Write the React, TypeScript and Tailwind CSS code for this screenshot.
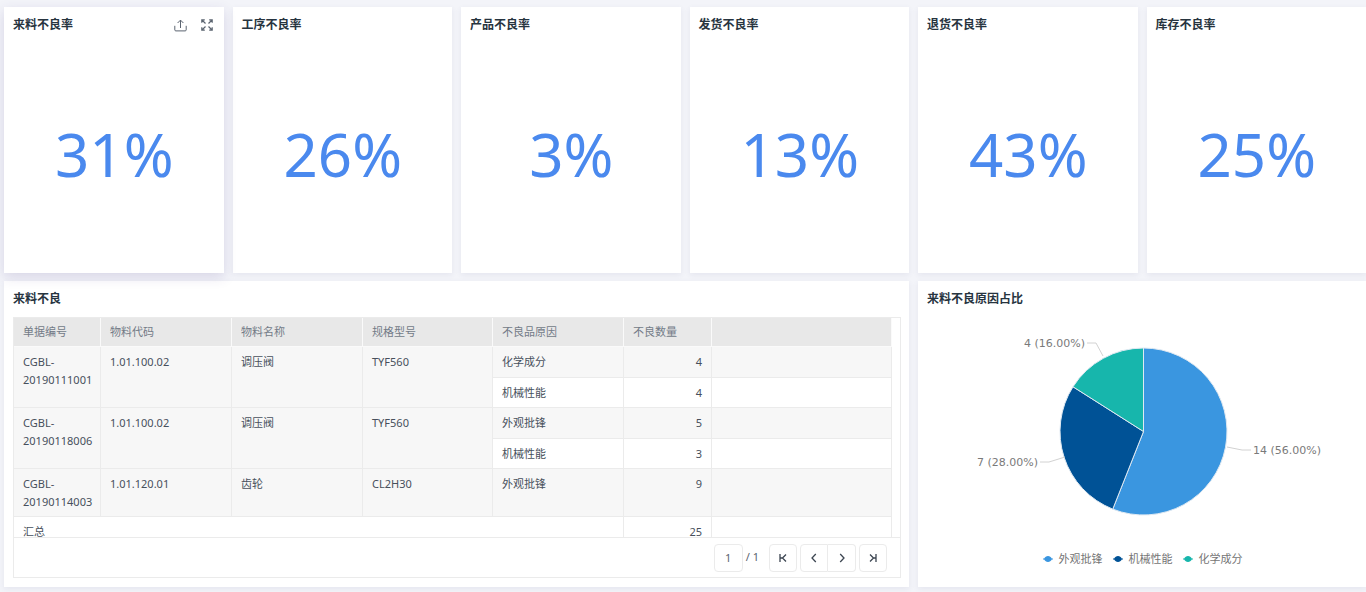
import type { ReactNode } from 'react'

const rates = [
  { title: '来料不良率', value: '31%', active: true },
  { title: '工序不良率', value: '26%' },
  { title: '产品不良率', value: '3%' },
  { title: '发货不良率', value: '13%' },
  { title: '退货不良率', value: '43%' },
  { title: '库存不良率', value: '25%' },
]

const columns = ['单据编号', '物料代码', '物料名称', '规格型号', '不良品原因', '不良数量']

const records = [
  {
    id: 'CGBL-20190111001',
    code: '1.01.100.02',
    name: '调压阀',
    model: 'TYF560',
    reasons: [
      { label: '化学成分', count: 4 },
      { label: '机械性能', count: 4 },
    ],
  },
  {
    id: 'CGBL-20190118006',
    code: '1.01.100.02',
    name: '调压阀',
    model: 'TYF560',
    reasons: [
      { label: '外观批锋', count: 5 },
      { label: '机械性能', count: 3 },
    ],
  },
  {
    id: 'CGBL-20190114003',
    code: '1.01.120.01',
    name: '齿轮',
    model: 'CL2H30',
    reasons: [{ label: '外观批锋', count: 9 }],
  },
]

const slices = [
  { name: '外观批锋', count: 14, color: '#3a96e0' },
  { name: '机械性能', count: 7, color: '#005296' },
  { name: '化学成分', count: 4, color: '#17b6ac' },
]

const labels = [
  { text: '14 (56.00%)', x: 310, y: 129, anchor: 'start' as const, line: '284,122 299,125 308,125' },
  { text: '7 (28.00%)', x: 95, y: 141, anchor: 'end' as const, line: '97,137 106,137 122,132' },
  { text: '4 (16.00%)', x: 142, y: 22, anchor: 'end' as const, line: '144,18 153,18 160,31' },
]

function ExportIcon() {
  return (
    <svg width="13" height="13" viewBox="0 0 13 13" fill="none" stroke="#5b6470" strokeWidth="1">
      <path d="M.8 6.8v4.1c0 .6.4 1 1 1h9.4c.6 0 1-.4 1-1V6.8M6.5 9V1.2M3.6 4l2.9-2.9L9.4 4" />
    </svg>
  )
}

function ExpandIcon() {
  return (
    <svg width="12" height="12" viewBox="0 0 12 12" fill="none" stroke="#5b6470" strokeWidth="1.2">
      <path d="M.8 3.800V.8h3M1 1l3.500 3.500M8.200.8h3v3M11 1 7.500 4.500M.8 8.200v3h3M1 11l3.500-3.500M8.200 11.200h3v-3M11 11 7.500 7.500" />
    </svg>
  )
}

function Card({
  title,
  active,
  className = '',
  children,
}: {
  title: string
  active?: boolean
  className?: string
  children: ReactNode
}) {
  return (
    <section
      className={`flex min-w-0 flex-col bg-white pl-[9px] pr-2 ${
        active
          ? 'relative shadow-[0_4px_12px_rgba(70,50,130,0.16)]'
          : 'shadow-[0_2px_6px_rgba(60,60,110,0.08)]'
      } ${className}`}
    >
      <header className="flex h-9 shrink-0 items-center justify-between">
        <h2 className="text-xs font-bold text-[#27343f]">{title}</h2>
        {active && (
          <div className="flex items-center gap-3.5 pr-[3px]">
            <button type="button" aria-label="导出">
              <ExportIcon />
            </button>
            <button type="button" aria-label="全屏">
              <ExpandIcon />
            </button>
          </div>
        )}
      </header>
      {children}
    </section>
  )
}

const cell = 'border-b border-r border-[#ebebeb] px-[9px] pb-[5px] pt-1.5 align-top'

function DefectTable() {
  return (
    <table className="w-full table-fixed border-separate border-spacing-0 text-[11px] leading-[18px] text-[#47505c]">
      <colgroup>
        <col className="w-[87px]" />
        <col className="w-[131px]" />
        <col className="w-[131px]" />
        <col className="w-[130px]" />
        <col className="w-[131px]" />
        <col className="w-[88px]" />
        <col />
      </colgroup>
      <thead>
        <tr>
          {[...columns, ''].map((name) => (
            <th
              key={name}
              className="h-[29px] border-b border-r border-[#fafafa] bg-[#e8e8e8] px-[9px] text-left font-normal text-[#737b87]"
            >
              {name}
            </th>
          ))}
        </tr>
      </thead>
      <tbody>
        {records.map((record) =>
          record.reasons.map((reason, i) => (
            <tr key={record.id + reason.label} className={i === 0 ? 'h-[31px] bg-[#f7f7f7]' : 'h-[30px]'}>
              {i === 0 &&
                [record.id, record.code, record.name, record.model].map((text, n) => (
                  <td key={n} rowSpan={record.reasons.length} className={`${cell} bg-[#f7f7f7]`}>
                    {text}
                  </td>
                ))}
              <td className={cell}>{reason.label}</td>
              <td className={`${cell} text-right`}>{reason.count}</td>
              <td className={cell} />
            </tr>
          )),
        )}
        <tr className="h-[31px]">
          <td colSpan={5} className={cell}>
            汇总
          </td>
          <td className={`${cell} text-right`}>25</td>
          <td className={cell} />
        </tr>
      </tbody>
    </table>
  )
}

function PageIcon({ d }: { d: string }) {
  return (
    <svg width="10" height="10" viewBox="0 0 10 10" fill="none" stroke="#3d4652" strokeWidth="1.3">
      <path d={d} />
    </svg>
  )
}

function Pager() {
  const button = 'flex h-7 w-7 items-center justify-center border border-[#ebebeb]'
  return (
    <div className="flex h-10 items-center justify-end border-t border-[#ebebeb] pr-[13px] text-[11px] text-[#5b6470]">
      <input
        aria-label="页码"
        defaultValue="1"
        className="h-7 w-[29px] rounded-sm border border-[#ebebeb] text-center"
      />
      <span className="ml-[3px]">/ 1</span>
      <button type="button" aria-label="首页" className={`${button} ml-2.5 rounded-sm`}>
        <PageIcon d="M2 1v8M8 1.5 4.5 5 8 8.5M2 5h2.5" />
      </button>
      <button type="button" aria-label="上一页" className={`${button} ml-[3px] rounded-l-sm`}>
        <PageIcon d="M6.8 1 3 5l3.8 4" />
      </button>
      <button type="button" aria-label="下一页" className={`${button} rounded-r-sm border-l-0`}>
        <PageIcon d="M3.2 1 7 5 3.2 9" />
      </button>
      <button type="button" aria-label="末页" className={`${button} ml-[3px] rounded-sm`}>
        <PageIcon d="M8 1v8M2 1.5 5.5 5 2 8.5M8 5H5.5" />
      </button>
    </div>
  )
}

function slicePath(from: number, to: number) {
  const cx = 200.5
  const cy = 106.5
  const r = 83.5
  const point = (t: number) =>
    `${cx + r * Math.sin(t * 2 * Math.PI)} ${cy - r * Math.cos(t * 2 * Math.PI)}`
  return `M${cx} ${cy}L${point(from)}A${r} ${r} 0 ${to - from > 0.5 ? 1 : 0} 1 ${point(to)}Z`
}

function ReasonPie() {
  const total = slices.reduce((sum, s) => sum + s.count, 0)
  let start = 0
  return (
    <div className="flex flex-col items-center pt-2">
      <svg width="400" height="212" viewBox="0 0 400 212" className="max-w-full">
        {slices.map((s) => {
          const from = start
          start += s.count / total
          return <path key={s.name} d={slicePath(from, start)} fill={s.color} stroke="#dfe9f2" strokeWidth="1" />
        })}
        {labels.map((l) => (
          <g key={l.text}>
            <polyline points={l.line} fill="none" stroke="#d2d2d2" />
            <text
              x={l.x}
              y={l.y}
              textAnchor={l.anchor}
              className="fill-[#7a7a7a] font-['DejaVu_Sans',sans-serif] text-[11px]"
            >
              {l.text}
            </text>
          </g>
        ))}
      </svg>
      <ul className="mt-3.5 flex gap-2.5 text-[11px] leading-4 text-[#757575]">
        {slices.map((s) => (
          <li key={s.name} className="flex items-center gap-1.5">
            <svg width="10" height="6" viewBox="0 0 10 6" fill={s.color}>
              <path d="M0 2.5h1.2C2 1 3.300 0 5 0s3 1 3.800 2.500H10v1H8.800C8 5 6.700 6 5 6S2 5 1.200 3.500H0z" />
            </svg>
            {s.name}
          </li>
        ))}
      </ul>
    </div>
  )
}

export default function App() {
  return (
    <main className="min-h-screen bg-[#f3f4f9] pb-1.5 pl-1 pt-[7px] font-['Noto_Sans','Noto_Sans_CJK_SC',sans-serif]">
      <div className="grid grid-cols-6 gap-x-[9px] gap-y-2">
        {rates.map((rate) => (
          <Card key={rate.title} title={rate.title} active={rate.active} className="h-[266px]">
            <p className="flex flex-1 items-center justify-center pb-2 text-[60px] leading-none text-[#4a89ee]">
              {rate.value}
            </p>
          </Card>
        ))}
        <Card title="来料不良" className="col-span-4 pb-[9px]">
          <div className="border border-[#ebebeb]">
            <div className="h-[219px] overflow-hidden pr-2">
              <DefectTable />
            </div>
            <Pager />
          </div>
        </Card>
        <Card title="来料不良原因占比" className="col-span-2">
          <ReasonPie />
        </Card>
      </div>
    </main>
  )
}
